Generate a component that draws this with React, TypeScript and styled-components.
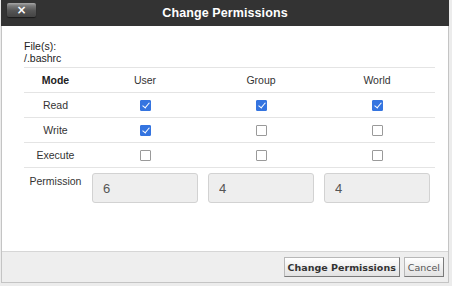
import React from "react";
import styled, { createGlobalStyle } from "styled-components";

const GlobalStyle = createGlobalStyle`
  html, body {
    margin: 0;
    padding: 0;
    background: #ececec;
  }
  body {
    font-family: "Liberation Sans", Arial, sans-serif;
  }
`;

const Dialog = styled.div`
  width: 448px;
  height: 283px;
  margin-left: 1px;
  display: flex;
  flex-direction: column;
  background: #fff;
  box-sizing: border-box;
  border: 1px solid #c4c4c4;
  border-top: none;
`;

const TitleBar = styled.div`
  position: relative;
  height: 26px;
  margin: 0 -1px;
  background: #333333;
  display: flex;
  align-items: center;
  justify-content: center;
`;

const Title = styled.h1`
  margin: 0;
  color: #fff;
  font-size: 12.5px;
  font-weight: bold;
  letter-spacing: 0.1px;
`;

const CloseButton = styled.button`
  position: absolute;
  left: 6px;
  top: 3px;
  width: 29px;
  height: 14px;
  padding: 0;
  border: none;
  border-radius: 2px;
  background: linear-gradient(#a8a8a8 0%, #7a7a7a 20%, #555 55%, #444 100%);
  box-shadow: 0 1px 1px rgba(0, 0, 0, 0.5);
  color: #fff;
  font-family: "DejaVu Sans", sans-serif;
  font-size: 12px;
  font-weight: bold;
  line-height: 14px;
  cursor: pointer;
`;

const Body = styled.div`
  flex: 1;
  padding: 14px 12px 0 22px;
  font-size: 10.5px;
  color: #222;
`;

const FileInfo = styled.div`
  line-height: 12px;
  margin-bottom: 3px;
`;

const Grid = styled.div`
  display: grid;
  grid-template-columns: 63px repeat(3, 1fr);
  width: 411px;
  border-top: 1px solid #e4e4e4;
`;

const Cell = styled.div<{ $bold?: boolean }>`
  height: 24px;
  display: flex;
  align-items: center;
  justify-content: center;
  border-bottom: 1px solid #e4e4e4;
  font-weight: ${({ $bold }) => ($bold ? "bold" : "normal")};
  color: ${({ $bold }) => ($bold ? "#222" : "#333")};
`;

const PermLabel = styled.div`
  padding-top: 7px;
  text-align: center;
  color: #333;
`;

const PermCell = styled.div`
  padding: 5px 5px 0 5px;
`;

const PermInput = styled.input`
  box-sizing: border-box;
  width: 100%;
  height: 30px;
  padding: 0 10px;
  border: 1px solid #d2d2d2;
  border-radius: 3px;
  background: #eeeeee;
  font-family: "Liberation Sans", Arial, sans-serif;
  font-size: 13px;
  color: #555;
  outline: none;
`;

const Check = styled.input`
  appearance: none;
  margin: 0;
  width: 11px;
  height: 11px;
  box-sizing: border-box;
  border: 1px solid #9a9a9a;
  border-radius: 1px;
  background: #fff;
  position: relative;

  &:checked {
    border-color: #3474e0;
    background: #3474e0;
  }
  &:checked::after {
    content: "";
    position: absolute;
    left: 3px;
    top: 0px;
    width: 3px;
    height: 6px;
    border: solid #fff;
    border-width: 0 1.5px 1.5px 0;
    transform: rotate(40deg);
  }
`;

const Footer = styled.div`
  height: 30px;
  background: #eeeeee;
  border-top: 1px solid #d6d6d6;
  display: flex;
  align-items: center;
  justify-content: flex-end;
  gap: 4px;
  padding-right: 4px;
`;

const FooterButton = styled.button<{ $primary?: boolean }>`
  height: 20px;
  padding: 0 3px;
  border: 1px solid #b8b8b8;
  border-right-color: #7a7a7a;
  border-bottom-color: #7a7a7a;
  border-radius: 0;
  background: linear-gradient(#ffffff, #e2e2e2);
  font-family: "DejaVu Sans", Verdana, sans-serif;
  font-size: 9.5px;
  font-weight: ${({ $primary }) => ($primary ? "bold" : "normal")};
  color: ${({ $primary }) => ($primary ? "#333" : "#555")};
  cursor: pointer;
`;

const modes = [
  { label: "Read", values: [true, true, true] },
  { label: "Write", values: [true, false, false] },
  { label: "Execute", values: [false, false, false] },
];

const octal = ["6", "4", "4"];

export default function App() {
  return (
    <>
      <GlobalStyle />
      <Dialog>
        <TitleBar>
          <CloseButton aria-label="Close">×</CloseButton>
          <Title>Change Permissions</Title>
        </TitleBar>
        <Body>
          <FileInfo>
            File(s):
            <br />
            /.bashrc
          </FileInfo>
          <Grid>
            <Cell $bold>Mode</Cell>
            <Cell>User</Cell>
            <Cell>Group</Cell>
            <Cell>World</Cell>
            {modes.map((m) => (
              <React.Fragment key={m.label}>
                <Cell>{m.label}</Cell>
                {m.values.map((v, i) => (
                  <Cell key={i}>
                    <Check type="checkbox" defaultChecked={v} />
                  </Cell>
                ))}
              </React.Fragment>
            ))}
            <PermLabel>Permission</PermLabel>
            {octal.map((o, i) => (
              <PermCell key={i}>
                <PermInput value={o} readOnly />
              </PermCell>
            ))}
          </Grid>
        </Body>
        <Footer>
          <FooterButton $primary>Change Permissions</FooterButton>
          <FooterButton>Cancel</FooterButton>
        </Footer>
      </Dialog>
    </>
  );
}
